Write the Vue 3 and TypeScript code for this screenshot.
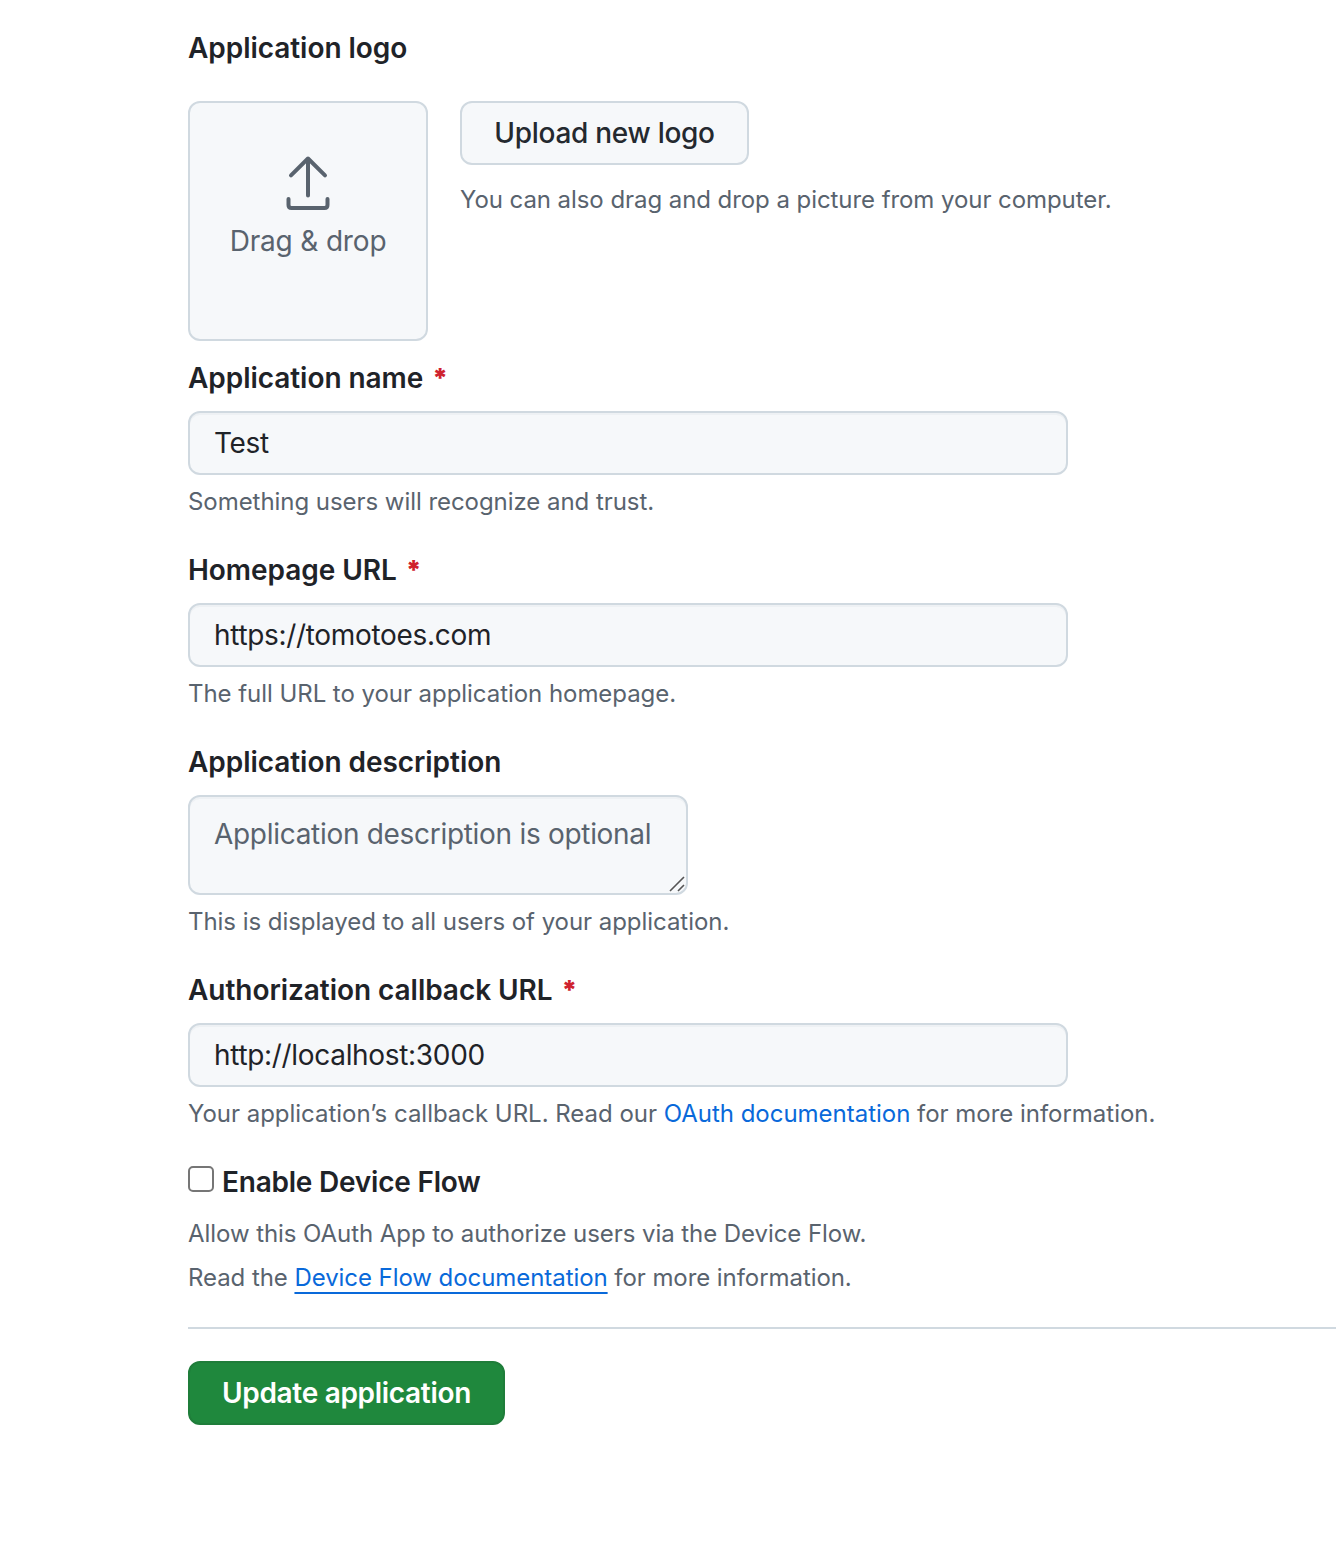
<script setup lang="ts">
import { ref } from 'vue'

const name = ref('Test')
const homepage = ref('https://tomotoes.com')
const description = ref('')
const callback = ref('http://localhost:3000')
const deviceFlow = ref(false)
</script>

<template>
  <form class="form" @submit.prevent>
    <h2 class="label">Application logo</h2>
    <section class="logo-row">
      <div class="drop">
        <svg width="48" height="56" viewBox="0 0 48 56" fill="none" stroke="#59636e" stroke-width="4" stroke-linecap="round" stroke-linejoin="round">
          <path d="M24 40.500V3.500M7 20.300 24 3.500l17 16.800M4.500 44v6q0 3 3 3h33q3 0 3-3v-6" />
        </svg>
        <span class="drop-text">Drag &amp; drop</span>
      </div>
      <div class="logo-side">
        <button type="button" class="btn">Upload new logo</button>
        <p class="note">You can also drag and drop a picture from your computer.</p>
      </div>
    </section>

    <div class="field first">
      <label class="label" for="name">Application name<span class="star">*</span></label>
      <input id="name" v-model="name" class="control" type="text" />
      <p class="note">Something users will recognize and trust.</p>
    </div>
    <div class="field">
      <label class="label" for="home">Homepage URL<span class="star">*</span></label>
      <input id="home" v-model="homepage" class="control" type="text" />
      <p class="note">The full URL to your application homepage.</p>
    </div>
    <div class="field tall">
      <label class="label" for="desc">Application description</label>
      <div class="area">
        <textarea id="desc" v-model="description" class="control" placeholder="Application description is optional"></textarea>
        <svg class="grip" width="18" height="18" viewBox="0 0 18 18" stroke="#555" stroke-width="1.6"><path d="M2 16 16 2M10 16l6-6" /></svg>
      </div>
      <p class="note">This is displayed to all users of your application.</p>
    </div>
    <div class="field">
      <label class="label" for="cb">Authorization callback URL<span class="star">*</span></label>
      <input id="cb" v-model="callback" class="control" type="text" />
      <p class="note callback">Your application’s callback URL. Read our <a href="#">OAuth documentation</a> for more information.</p>
    </div>

    <div class="device">
      <label class="check-row label"><input v-model="deviceFlow" type="checkbox" class="check" /><span>Enable Device Flow</span></label>
      <p class="note">Allow this OAuth App to authorize users via the Device Flow.</p>
      <p class="note read">Read the <a href="#" class="under">Device Flow documentation</a> for more information.</p>
    </div>
    <div class="actions"><button type="submit" class="btn primary">Update application</button></div>
  </form>
</template>

<style>
body {
  background: #fff;
}
</style>

<style scoped>
.form {
  box-sizing: border-box;
  height: 1546px;
  padding: 27px 0 0 188px;
  overflow: hidden;
  color: #1f2328;
  font: 28px/42px Inter, sans-serif;
}
.label {
  display: block;
  margin: 0;
  font-size: 28px;
  font-weight: 600;
  line-height: 42px;
  letter-spacing: -0.05px;
}
.logo-row {
  display: flex;
  gap: 32px;
  margin-top: 32px;
}
.drop {
  box-sizing: border-box;
  display: flex;
  flex-direction: column;
  align-items: center;
  width: 240px;
  height: 240px;
  padding-top: 52px;
  border: 2px solid #d0d9e0;
  border-radius: 12px;
  background: #f6f8fa;
  color: #59636e;
}
.drop svg {
  display: block;
}
.drop-text {
  margin-top: 9px;
  letter-spacing: -0.17px;
}
.btn {
  box-sizing: border-box;
  display: block;
  width: 289px;
  height: 64px;
  padding: 0;
  border: 2px solid #d0d9e0;
  border-radius: 12px;
  background: #f6f8fa;
  color: #24292f;
  font: 500 28px/40px Inter, sans-serif;
  letter-spacing: -0.28px;
  white-space: nowrap;
}
.note {
  margin: 0;
  color: #59636e;
  font-size: 24px;
  line-height: 36px;
  letter-spacing: -0.05px;
  white-space: nowrap;
}
.note.callback {
  letter-spacing: -0.02px;
}
.logo-side .note {
  margin-top: 17px;
  letter-spacing: -0.065px;
}
.field {
  height: 192px;
}
.field.first {
  margin-top: 16px;
}
.field.tall {
  height: 228px;
}
.star {
  margin-left: 9px;
  color: #cf222e;
  font-size: 26px;
  font-weight: 900;
  line-height: 20px;
  vertical-align: 1px;
}
.control {
  box-sizing: border-box;
  display: block;
  width: 880px;
  height: 64px;
  margin: 12px 0 9px;
  padding: 0 24px;
  border: 2px solid #d0d9e0;
  border-radius: 12px;
  outline: 0;
  background: #f6f8fa;
  box-shadow: inset 0 2px 0 rgba(208, 215, 222, 0.2);
  color: #1f2328;
  font: 28px/40px Inter, sans-serif;
  letter-spacing: -0.32px;
}
.area {
  position: relative;
  width: 500px;
}
textarea.control {
  width: 500px;
  height: 100px;
  padding: 17px 24px 15px;
  overflow: hidden;
  resize: none;
  letter-spacing: -0.3px;
}
.control::placeholder {
  color: #59636e;
  opacity: 1;
}
.grip {
  position: absolute;
  right: 2px;
  bottom: 2px;
}
a {
  color: #0969da;
  text-decoration: none;
}
.under {
  text-decoration: underline;
  text-decoration-thickness: 2px;
  text-underline-offset: 6px;
}
.check-row {
  display: flex;
  letter-spacing: -0.22px;
}
.check {
  box-sizing: border-box;
  appearance: none;
  width: 26px;
  height: 26px;
  margin: 5px 8px 0 0;
  border: 2px solid #767676;
  border-radius: 5px;
  background: #fff;
}
.device .note {
  margin-top: 13px;
  letter-spacing: -0.065px;
}
.device .read {
  margin-top: 8px;
}
.actions {
  margin-top: 31px;
  padding-top: 32px;
  border-top: 2px solid #d0d9e0;
}
.primary {
  width: 317px;
  border-color: #1f7d3a;
  background: #1f883d;
  color: #fff;
  font-weight: 600;
  letter-spacing: -0.31px;
}
</style>
